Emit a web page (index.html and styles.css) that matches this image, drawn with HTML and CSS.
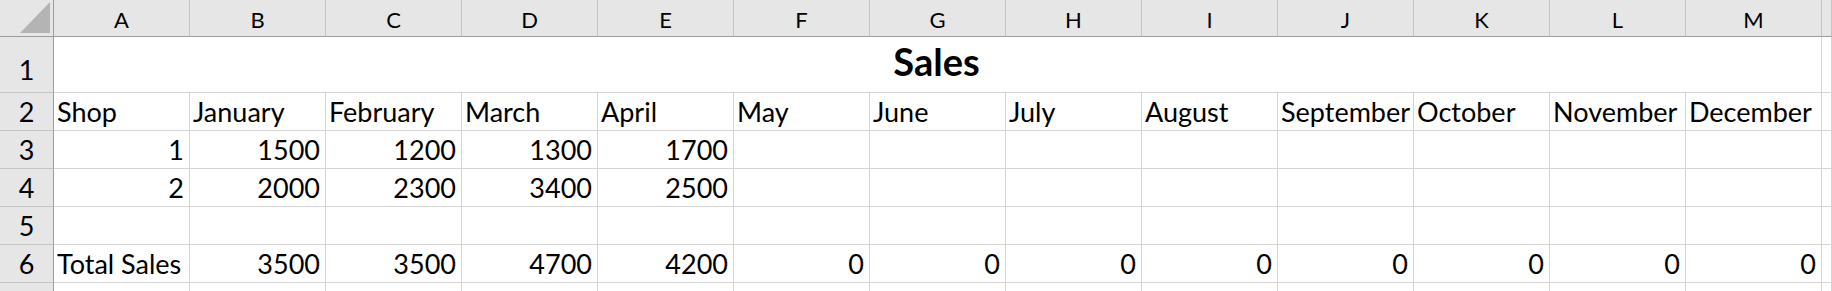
FILE: index.html
```html
<!doctype html>
<html>
    <head>
        <title>Sales</title>
        <link rel="stylesheet" href="styles.css">
    </head>
    <body>
        <div class="sheet">
            <!-- column headers -->
            <div class="corner">
                <svg width="30" height="31" viewBox="0 0 30 31"><polygon points="0,31 30,31 30,0" fill="#b4b4b4"/></svg>
            </div>
            <div class="col-head">A</div>
            <div class="col-head">B</div>
            <div class="col-head">C</div>
            <div class="col-head">D</div>
            <div class="col-head">E</div>
            <div class="col-head">F</div>
            <div class="col-head">G</div>
            <div class="col-head">H</div>
            <div class="col-head">I</div>
            <div class="col-head">J</div>
            <div class="col-head">K</div>
            <div class="col-head">L</div>
            <div class="col-head">M</div>
            <div class="col-head"></div>

            <!-- row 1: merged title -->
            <div class="row-head tall">1</div>
            <div class="cell title">Sales</div>
            <div class="cell"></div>

            <!-- row 2: months -->
            <div class="row-head">2</div>
            <div class="cell">Shop</div>
            <div class="cell">January</div>
            <div class="cell">February</div>
            <div class="cell">March</div>
            <div class="cell">April</div>
            <div class="cell">May</div>
            <div class="cell">June</div>
            <div class="cell">July</div>
            <div class="cell">August</div>
            <div class="cell">September</div>
            <div class="cell">October</div>
            <div class="cell">November</div>
            <div class="cell">December</div>
            <div class="cell"></div>

            <!-- row 3 -->
            <div class="row-head">3</div>
            <div class="cell num">1</div>
            <div class="cell num">1500</div>
            <div class="cell num">1200</div>
            <div class="cell num">1300</div>
            <div class="cell num">1700</div>
            <div class="cell"></div>
            <div class="cell"></div>
            <div class="cell"></div>
            <div class="cell"></div>
            <div class="cell"></div>
            <div class="cell"></div>
            <div class="cell"></div>
            <div class="cell"></div>
            <div class="cell"></div>

            <!-- row 4 -->
            <div class="row-head">4</div>
            <div class="cell num">2</div>
            <div class="cell num">2000</div>
            <div class="cell num">2300</div>
            <div class="cell num">3400</div>
            <div class="cell num">2500</div>
            <div class="cell"></div>
            <div class="cell"></div>
            <div class="cell"></div>
            <div class="cell"></div>
            <div class="cell"></div>
            <div class="cell"></div>
            <div class="cell"></div>
            <div class="cell"></div>
            <div class="cell"></div>

            <!-- row 5: empty -->
            <div class="row-head">5</div>
            <div class="cell"></div>
            <div class="cell"></div>
            <div class="cell"></div>
            <div class="cell"></div>
            <div class="cell"></div>
            <div class="cell"></div>
            <div class="cell"></div>
            <div class="cell"></div>
            <div class="cell"></div>
            <div class="cell"></div>
            <div class="cell"></div>
            <div class="cell"></div>
            <div class="cell"></div>
            <div class="cell"></div>

            <!-- row 6: totals -->
            <div class="row-head">6</div>
            <div class="cell">Total Sales</div>
            <div class="cell num">3500</div>
            <div class="cell num">3500</div>
            <div class="cell num">4700</div>
            <div class="cell num">4200</div>
            <div class="cell num">0</div>
            <div class="cell num">0</div>
            <div class="cell num">0</div>
            <div class="cell num">0</div>
            <div class="cell num">0</div>
            <div class="cell num">0</div>
            <div class="cell num">0</div>
            <div class="cell num">0</div>
            <div class="cell"></div>

            <!-- row 7, only its top edge is on screen -->
            <div class="row-head"></div>
            <div class="cell"></div>
            <div class="cell"></div>
            <div class="cell"></div>
            <div class="cell"></div>
            <div class="cell"></div>
            <div class="cell"></div>
            <div class="cell"></div>
            <div class="cell"></div>
            <div class="cell"></div>
            <div class="cell"></div>
            <div class="cell"></div>
            <div class="cell"></div>
            <div class="cell"></div>
            <div class="cell"></div>
        </div>
    </body>
</html>
```

FILE: styles.css
```css
* { margin: 0; padding: 0; box-sizing: border-box; }

body {
    background: #ffffff;
    font-family: 'Lato', 'Open Sans', sans-serif;
    color: #000000;
    overflow: hidden;
}

.sheet {
    display: grid;
    grid-template-columns: 54px repeat(13, 136px) 1fr;
    grid-template-rows: 37px 56px repeat(6, 38px);
}

/* headers */
.corner, .col-head, .row-head {
    background: #e6e6e6;
}

.corner {
    display: flex;
    justify-content: flex-end;
    align-items: flex-end;
    padding: 0 3px 3px 0;
    border-right: 1px solid #9c9c9c;
    border-bottom: 1px solid #9c9c9c;
}

.col-head {
    font-size: 22px;
    line-height: 33px;
    padding-top: 3px;
    text-align: center;
    border-right: 1px solid #c4c4c4;
    border-bottom: 1px solid #9c9c9c;
}

.row-head {
    display: flex;
    justify-content: center;
    align-items: flex-end;
    font-size: 27px;
    line-height: 37px;
    border-right: 1px solid #9c9c9c;
    border-bottom: 1px solid #c4c4c4;
}

.row-head.tall {
    padding-bottom: 4px;
}

/* cells */
.cell {
    display: flex;
    align-items: flex-end;
    font-size: 27px;
    line-height: 37px;
    padding: 0 5px 0 3px;
    white-space: nowrap;
    overflow: hidden;
    border-right: 1px solid #d4d4d4;
    border-bottom: 1px solid #d4d4d4;
}

.cell.num {
    justify-content: flex-end;
}

.cell.title {
    grid-column: span 13;
    justify-content: center;
    font-size: 38px;
    font-weight: bold;
    line-height: 37px;
    padding-bottom: 12px;
}
```
